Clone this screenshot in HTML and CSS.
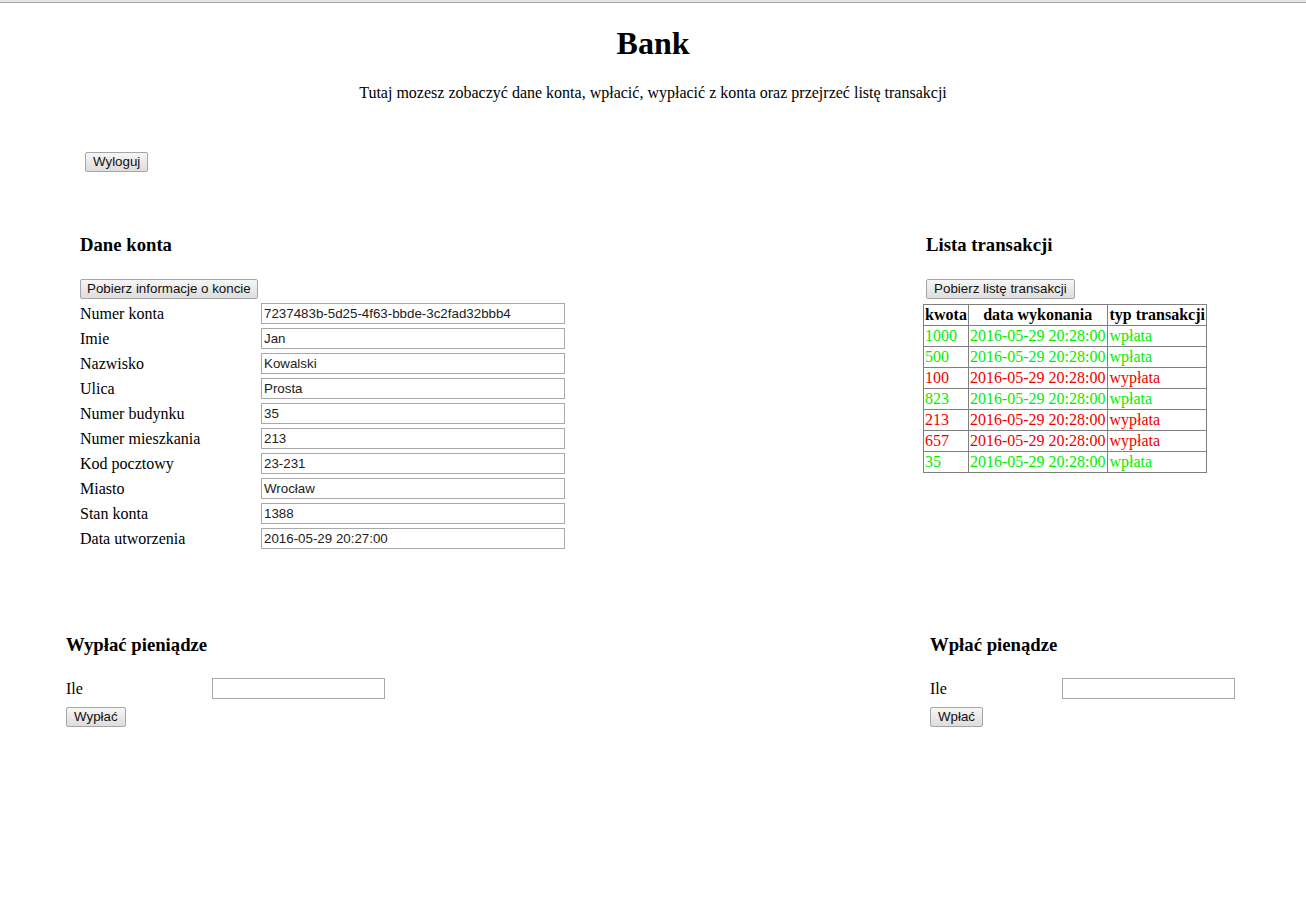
FILE: index.html
```html
<!DOCTYPE html>
<html lang="pl">
<head>
<meta charset="utf-8">
<title>Bank</title>
<link rel="stylesheet" href="styles.css">
</head>
<body>
<div class="topbar"></div>
<header class="header">
  <h1 class="title">Bank</h1>
  <p class="subtitle">Tutaj mozesz zobaczyć dane konta, wpłacić, wypłacić z konta oraz przejrzeć listę transakcji</p>
</header>
<div class="logout"><button class="btn">Wyloguj</button></div>

<div class="top-row">
  <section class="account">
    <h3 class="heading">Dane konta</h3>
    <button class="btn btn-wide">Pobierz informacje o koncie</button>
    <div class="form">
      <div class="row"><span class="label">Numer konta</span><input class="field" value="7237483b-5d25-4f63-bbde-3c2fad32bbb4"></div>
      <div class="row"><span class="label">Imie</span><input class="field" value="Jan"></div>
      <div class="row"><span class="label">Nazwisko</span><input class="field" value="Kowalski"></div>
      <div class="row"><span class="label">Ulica</span><input class="field" value="Prosta"></div>
      <div class="row"><span class="label">Numer budynku</span><input class="field" value="35"></div>
      <div class="row"><span class="label">Numer mieszkania</span><input class="field" value="213"></div>
      <div class="row"><span class="label">Kod pocztowy</span><input class="field" value="23-231"></div>
      <div class="row"><span class="label">Miasto</span><input class="field" value="Wrocław"></div>
      <div class="row"><span class="label">Stan konta</span><input class="field" value="1388"></div>
      <div class="row"><span class="label">Data utworzenia</span><input class="field" value="2016-05-29 20:27:00"></div>
    </div>
  </section>

  <section class="transactions">
    <h3 class="heading tx-pad">Lista transakcji</h3>
    <button class="btn tx-btn">Pobierz listę transakcji</button>
    <table class="tx-table">
      <thead>
        <tr><th>kwota</th><th>data wykonania</th><th>typ transakcji</th></tr>
      </thead>
      <tbody>
        <tr class="in"><td>1000</td><td>2016-05-29 20:28:00</td><td>wpłata</td></tr>
        <tr class="in"><td>500</td><td>2016-05-29 20:28:00</td><td>wpłata</td></tr>
        <tr class="out"><td>100</td><td>2016-05-29 20:28:00</td><td>wypłata</td></tr>
        <tr class="in"><td>823</td><td>2016-05-29 20:28:00</td><td>wpłata</td></tr>
        <tr class="out"><td>213</td><td>2016-05-29 20:28:00</td><td>wypłata</td></tr>
        <tr class="out"><td>657</td><td>2016-05-29 20:28:00</td><td>wypłata</td></tr>
        <tr class="in"><td>35</td><td>2016-05-29 20:28:00</td><td>wpłata</td></tr>
      </tbody>
    </table>
  </section>
</div>

<div class="bottom-row">
  <section class="money money-left">
    <h3 class="heading">Wypłać pieniądze</h3>
    <div class="row"><span class="label-sm">Ile</span><input class="field-sm"></div>
    <button class="btn">Wypłać</button>
  </section>
  <section class="money money-right">
    <h3 class="heading">Wpłać pienądze</h3>
    <div class="row"><span class="label-sm">Ile</span><input class="field-sm"></div>
    <button class="btn">Wpłać</button>
  </section>
</div>
</body>
</html>
```

FILE: styles.css
```css
html, body {
  margin: 0;
  padding: 0;
  background: #fff;
}
body {
  font-family: "Liberation Serif", "Times New Roman", serif;
  font-size: 16px;
  color: #000;
  width: 1306px;
}
.topbar {
  height: 2px;
  background: #e6e6e6;
  border-bottom: 1px solid #a8a8a8;
}
.header {
  text-align: center;
}
.title {
  font-size: 32px;
  font-weight: bold;
  margin: 22px 0 0 0;
  line-height: 37px;
}
.subtitle {
  margin: 22px 0 0 0;
  line-height: 18px;
}
.btn {
  font-family: "Liberation Sans", Arial, sans-serif;
  font-size: 13.33px;
  color: #111;
  background: linear-gradient(#f6f6f6, #dddddd);
  border: 1px solid #a6a6a6;
  border-radius: 2px;
  height: 20px;
  padding: 0 7px;
  line-height: 18px;
  display: block;
}
.btn-wide {
  padding: 0 6px;
}
.logout {
  padding: 50px 0 0 85px;
}
.top-row {
  display: flex;
  justify-content: space-between;
  padding: 0 99px 0 80px;
  margin-top: 62px;
}
.heading {
  font-size: 18.72px;
  font-weight: bold;
  margin: 0 0 23px 0;
  line-height: 22px;
}
.form {
  margin-top: 4px;
  display: flex;
  flex-direction: column;
  gap: 4px;
}
.row {
  display: flex;
  align-items: center;
  height: 21px;
}
.label {
  width: 181px;
  line-height: 21px;
}
.field {
  width: 304px;
  height: 21px;
  box-sizing: border-box;
  border: 1px solid #a9a9a9;
  padding: 0 2px;
  font-family: "Liberation Sans", Arial, sans-serif;
  font-size: 13.33px;
  color: #222;
  margin: 0;
}
.transactions {
  display: flex;
  flex-direction: column;
  align-items: flex-start;
}
.tx-pad {
  padding-left: 3px;
}
.tx-btn {
  margin-left: 3px;
}
.tx-table {
  border-collapse: collapse;
  margin-top: 5px;
}
.tx-table th, .tx-table td {
  border: 1px solid #808080;
  padding: 0 1px;
  height: 20px;
  line-height: 20px;
  white-space: nowrap;
}
.tx-table th:nth-child(2), .tx-table td:nth-child(2) {
  padding-right: 2px;
}
.tx-table th {
  font-weight: bold;
}
.tx-table td {
  text-align: left;
}
.in td { color: #00ee00; }
.out td { color: #ee0000; }
.bottom-row {
  display: flex;
  justify-content: space-between;
  padding: 0 71px 0 66px;
  margin-top: 85px;
}
.money .row {
  margin-bottom: 8px;
}
.money .heading {
  margin-bottom: 22px;
}
.label-sm {
  width: 146px;
}
.money-right .label-sm {
  width: 132px;
}
.field-sm {
  width: 173px;
  height: 21px;
  box-sizing: border-box;
  border: 1px solid #a9a9a9;
  margin: 0;
  font-family: "Liberation Sans", Arial, sans-serif;
  font-size: 13.33px;
}
```
